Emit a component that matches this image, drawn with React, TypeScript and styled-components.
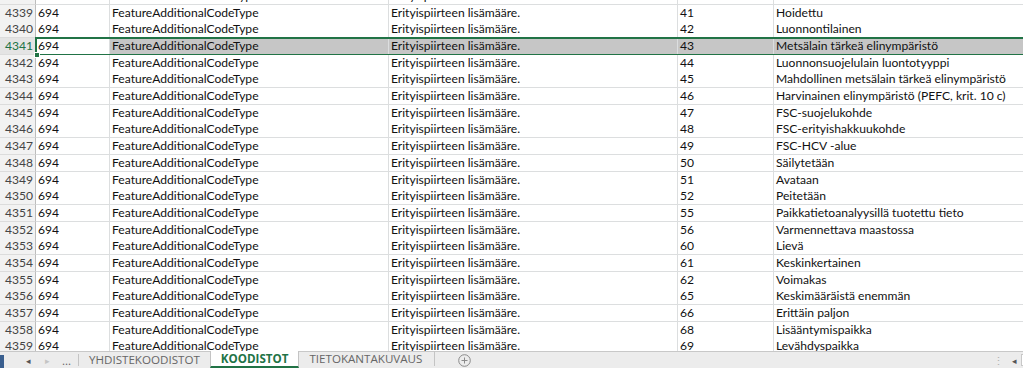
import styled, { createGlobalStyle, css } from "styled-components";

type RowType = {
	n: number;
	id: string;
	type: string;
	desc: string;
	code: string;
	name: string;
};

const names: [string, string][] = [
	["40", "Hoitamaton"],
	["41", "Hoidettu"],
	["42", "Luonnontilainen"],
	["43", "Metsälain tärkeä elinympäristö"],
	["44", "Luonnonsuojelulain luontotyyppi"],
	["45", "Mahdollinen metsälain tärkeä elinympäristö"],
	["46", "Harvinainen elinympäristö (PEFC, krit. 10 c)"],
	["47", "FSC-suojelukohde"],
	["48", "FSC-erityishakkuukohde"],
	["49", "FSC-HCV -alue"],
	["50", "Säilytetään"],
	["51", "Avataan"],
	["52", "Peitetään"],
	["55", "Paikkatietoanalyysillä tuotettu tieto"],
	["56", "Varmennettava maastossa"],
	["60", "Lievä"],
	["61", "Keskinkertainen"],
	["62", "Voimakas"],
	["65", "Keskimääräistä enemmän"],
	["66", "Erittäin paljon"],
	["68", "Lisääntymispaikka"],
	["69", "Levähdyspaikka"],
];

const rows: RowType[] = names.map(([code, name], i) => ({
	n: 4338 + i,
	id: "694",
	type: "FeatureAdditionalCodeType",
	desc: "Erityispiirteen lisämääre.",
	code,
	name,
}));

const SELECTED = 4341;
const GREEN = "#217346";

export default function App() {
	return (
		<>
			<GlobalStyle />
			<Sheet>
				<Viewport>
					<Body>
						{rows.map((r) => {
							const sel = r.n === SELECTED;
							return (
								<Row key={r.n} $selected={sel}>
									<RowHeader $selected={sel}>{r.n}</RowHeader>
									<Cell>{r.id}</Cell>
									<Cell $selected={sel}>{r.type}</Cell>
									<Cell $selected={sel}>{r.desc}</Cell>
									<Cell $selected={sel}>{r.code}</Cell>
									<Cell $selected={sel} $last>
										{r.name}
									</Cell>
									{sel && <FillHandle />}
								</Row>
							);
						})}
					</Body>
				</Viewport>
				<TabBar>
					<EdgeMark />
					<NavArrow $first>◂</NavArrow>
					<NavArrow $dim>▸</NavArrow>
					<Ellipsis>...</Ellipsis>
					<Tab>YHDISTEKOODISTOT</Tab>
					<Tab $active>KOODISTOT</Tab>
					<Tab $last>TIETOKANTAKUVAUS</Tab>
					<AddSheet>
						<svg width="13" height="13" viewBox="0 0 13 13">
							<circle cx="6.5" cy="6.5" r="5.8" fill="none" stroke="#8a8a8a" strokeWidth="1" />
							<path d="M6.5 3.5v6M3.5 6.5h6" stroke="#8a8a8a" strokeWidth="1" />
						</svg>
					</AddSheet>
					<Spacer />
					<Splitter>⋮</Splitter>
					<NavArrow $small>◂</NavArrow>
					<Scroll />
				</TabBar>
			</Sheet>
		</>
	);
}

const GlobalStyle = createGlobalStyle`
	html, body {
		margin: 0;
		padding: 0;
		background: #fff;
		overflow: hidden;
	}
`;

const Sheet = styled.div`
	width: 1023px;
	height: 368px;
	display: flex;
	flex-direction: column;
	overflow: hidden;
	font-family: Lato, "Liberation Sans", sans-serif;
`;

const Viewport = styled.div`
	flex: 1;
	overflow: hidden;
`;

const Body = styled.div`
	margin-top: -12.05px;
`;

const Row = styled.div<{ $selected?: boolean }>`
	position: relative;
	display: grid;
	grid-template-columns: 36px 74px 279px 289px 96px 1fr;
	height: 16.7px;
	${(p) =>
		p.$selected &&
		css`
			&::after {
				content: "";
				position: absolute;
				left: 35px;
				right: -2px;
				top: -1px;
				bottom: -1px;
				border: 2px solid ${GREEN};
				pointer-events: none;
			}
		`}
`;

const RowHeader = styled.div<{ $selected?: boolean }>`
	box-sizing: border-box;
	background: ${(p) => (p.$selected ? "#e4e4e4" : "#f2f2f2")};
	border-right: 1px solid #bdbdbd;
	border-bottom: 1px solid #dcdcdc;
	color: ${(p) => (p.$selected ? GREEN : "#444")};
	font-size: 12.1px;
	line-height: 16px;
	text-align: right;
	padding-right: 2px;
`;

const Cell = styled.div<{ $selected?: boolean; $last?: boolean }>`
	box-sizing: border-box;
	border-right: ${(p) => (p.$last ? "none" : "1px solid #dcdedf")};
	border-bottom: 1px solid #dcdedf;
	background: ${(p) => (p.$selected ? "#c6c6c6" : "#fff")};
	color: #111;
	font-size: 12.1px;
	line-height: 16px;
	padding-left: 2px;
	white-space: nowrap;
	overflow: hidden;
`;

const FillHandle = styled.div`
	position: absolute;
	left: 34px;
	bottom: -3px;
	width: 4px;
	height: 4px;
	background: ${GREEN};
	border: 1px solid #fff;
	z-index: 2;
`;

const TabBar = styled.div`
	height: 16px;
	flex: none;
	display: flex;
	align-items: stretch;
	background: #ececec;
	border-top: 1px solid #c8c8c8;
	font-family: "Open Sans", "Liberation Sans", sans-serif;
	font-size: 11.6px;
	color: #555;
`;

const EdgeMark = styled.div`
	width: 4px;
	margin-top: 3px;
	background: #3a5f8f;
`;

const NavArrow = styled.div<{ $dim?: boolean; $small?: boolean; $first?: boolean }>`
	display: flex;
	align-items: center;
	justify-content: center;
	width: ${(p) => (p.$small ? "12px" : "19px")};
	margin-left: ${(p) => (p.$first ? "15px" : p.$small ? "4px" : "0")};
	font-size: 9px;
	color: ${(p) => (p.$dim ? "#c4c4c4" : "#555")};
`;

const Ellipsis = styled.div`
	display: flex;
	align-items: center;
	width: 16px;
	padding-left: 5px;
	color: #666;
	border-right: 1px solid #c4c4c4;
	margin: 2px 0;
`;

const Tab = styled.div<{ $active?: boolean; $last?: boolean }>`
	display: flex;
	align-items: center;
	padding: 0 10px;
	margin-top: -1px;
	${(p) =>
		p.$active
			? css`
					background: #fff;
					color: ${GREEN};
					font-weight: 700;
					border-bottom: 2px solid ${GREEN};
					border-left: 1px solid #c4c4c4;
					border-right: 1px solid #c4c4c4;
				`
			: css`
					color: #666;
				`}
	${(p) =>
		p.$last &&
		css`
			border-right: 1px solid #c4c4c4;
			margin-bottom: 2px;
			padding-right: 12px;
		`}
`;

const AddSheet = styled.div`
	display: flex;
	align-items: center;
	padding-left: 23px;
`;

const Spacer = styled.div`
	flex: 1;
`;

const Splitter = styled.div`
	display: flex;
	align-items: center;
	color: #b0b0b0;
	font-size: 11px;
`;

const Scroll = styled.div`
	width: 1px;
	margin: 2px 0 2px 1px;
	background: #fff;
	border: 1px solid #c8c8c8;
	border-right: none;
`;
